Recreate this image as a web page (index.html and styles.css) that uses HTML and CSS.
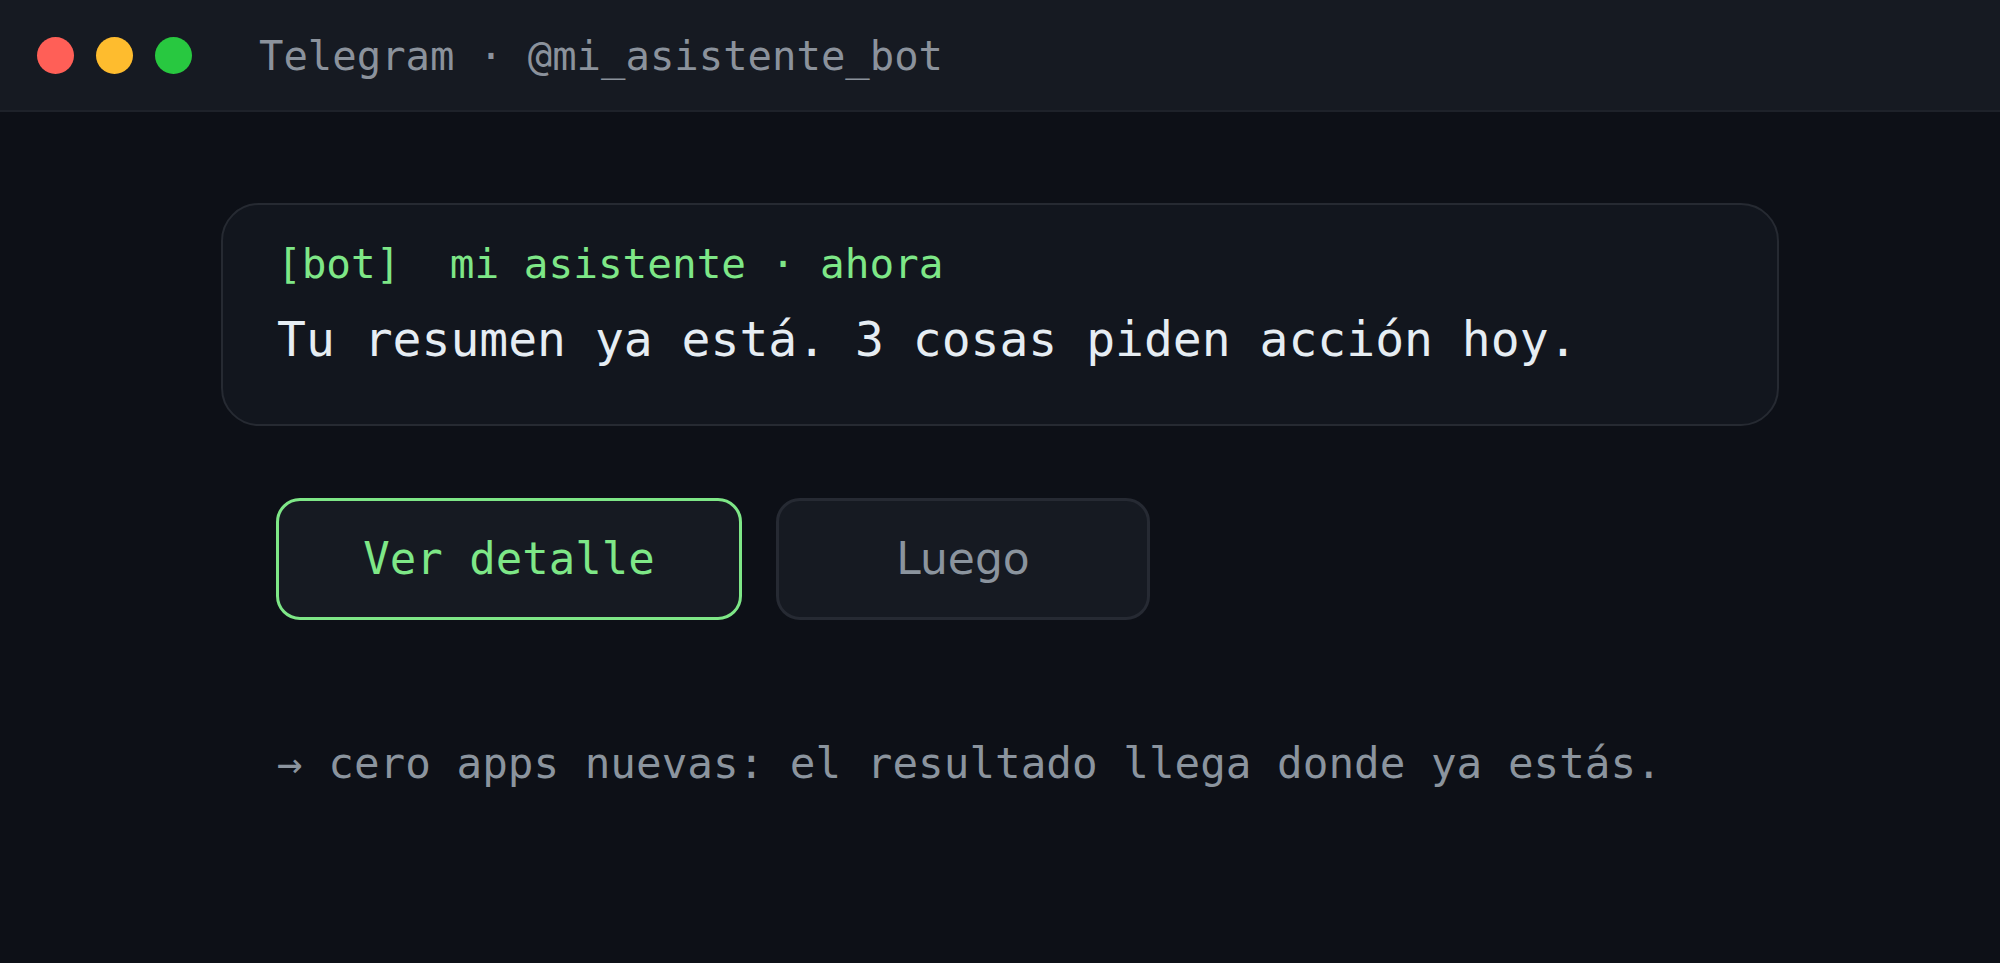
FILE: index.html
```html
<!DOCTYPE html>
<html lang="es">
<head>
<meta charset="utf-8">
<title>Telegram · @mi_asistente_bot</title>
<link rel="stylesheet" href="styles.css">
</head>
<body>
<div class="window">
  <header class="titlebar">
    <div class="dots">
      <span class="dot red"></span>
      <span class="dot yellow"></span>
      <span class="dot green"></span>
    </div>
    <div class="title">Telegram · @mi_asistente_bot</div>
  </header>
  <main class="content">
    <section class="card">
      <div class="meta">[bot]  mi asistente · ahora</div>
      <p class="message">Tu resumen ya está. 3 cosas piden acción hoy.</p>
    </section>
    <div class="actions">
      <button class="btn primary">Ver detalle</button>
      <button class="btn secondary">Luego</button>
    </div>
    <p class="note">→ cero apps nuevas: el resultado llega donde ya estás.</p>
  </main>
</div>
</body>
</html>
```
FILE: styles.css
```css
html, body {
  margin: 0;
  padding: 0;
}
body {
  background: #0d1017;
  width: 2000px;
  height: 963px;
  overflow: hidden;
  font-family: "DejaVu Sans Mono", monospace;
}
.titlebar {
  height: 110px;
  background: #161a22;
  border-bottom: 2px solid #1e222a;
  display: flex;
  align-items: center;
  padding-left: 37px;
}
.dots {
  display: flex;
  gap: 22px;
  margin-right: 67px;
}
.dot {
  width: 37px;
  height: 37px;
  border-radius: 50%;
  display: block;
}
.red { background: #ff5f57; }
.yellow { background: #febc2e; }
.green { background: #28c840; }
.title {
  font-size: 40.6px;
  color: #8b929c;
  line-height: 1.2;
  padding-top: 2px;
}
.content {
  width: 1558px;
  margin: 0 auto;
  padding-top: 91px;
}
.card {
  border: 2px solid #262a32;
  border-radius: 38px;
  background: #12161e;
  padding: 35px 54px 55px;
}
.meta {
  font-size: 41px;
  line-height: 1.2;
  color: #7ee787;
  white-space: pre;
}
.message {
  margin: 22px 0 0;
  font-size: 48px;
  line-height: 1.2;
  color: #e6edf3;
}
.actions {
  margin-top: 72px;
  padding-left: 55px;
  display: flex;
  gap: 34px;
}
.btn {
  box-sizing: border-box;
  height: 122px;
  border-radius: 24px;
  border: 3px solid #262a33;
  background: #161a22;
  font-size: 44px;
  padding: 0;
  display: flex;
  align-items: center;
  justify-content: center;
}
.primary {
  width: 466px;
  border-color: #7ee787;
  color: #7ee787;
  font-family: "DejaVu Sans Mono", monospace;
}
.secondary {
  width: 374px;
  color: #8b949e;
  font-family: "DejaVu Sans", sans-serif;
}
.note {
  margin: 118px 0 0;
  padding-left: 56px;
  font-size: 42.6px;
  line-height: 1.2;
  color: #8b949e;
}
```
